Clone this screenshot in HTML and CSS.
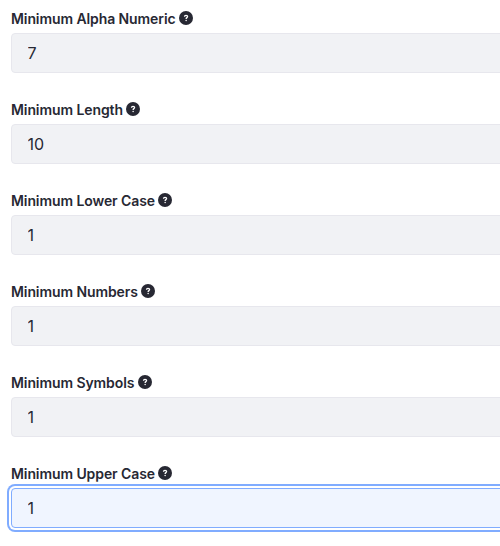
FILE: index.html
```html
<!DOCTYPE html>
<html lang="en">
<head>
<meta charset="utf-8">
<title>Password Policy</title>
<link rel="stylesheet" href="styles.css">
</head>
<body>
<svg width="0" height="0" class="defs"><symbol id="help" viewBox="0 0 14 14"><circle cx="7" cy="7" r="7" fill="#272833"/><path d="M5.500 5.700C5.500 4.700 6.200 4.300 7 4.300s1.600.5 1.600 1.300C8.600 6.700 7.100 6.600 7.100 7.900" fill="none" stroke="#fff" stroke-width="1.300"/><circle cx="7.100" cy="9.500" r=".75" fill="#fff"/></symbol></svg>
<form class="form">
<div class="group"><label class="label" for="f1"><span>Minimum Alpha Numeric</span><svg class="icon"><use href="#help"/></svg></label><input class="control" id="f1" value="7"></div>
<div class="group"><label class="label" for="f2"><span>Minimum Length</span><svg class="icon"><use href="#help"/></svg></label><input class="control" id="f2" value="10"></div>
<div class="group"><label class="label" for="f3"><span>Minimum Lower Case</span><svg class="icon"><use href="#help"/></svg></label><input class="control" id="f3" value="1"></div>
<div class="group"><label class="label" for="f4"><span>Minimum Numbers</span><svg class="icon"><use href="#help"/></svg></label><input class="control" id="f4" value="1"></div>
<div class="group"><label class="label" for="f5"><span>Minimum Symbols</span><svg class="icon"><use href="#help"/></svg></label><input class="control" id="f5" value="1"></div>
<div class="group"><label class="label" for="f6"><span>Minimum Upper Case</span><svg class="icon"><use href="#help"/></svg></label><input class="control focused" id="f6" value="1"></div>
</form>
</body>
</html>
```

FILE: styles.css
```css
* { box-sizing: border-box; }
body { margin: 0; background: #fff; font-family: Inter, "Liberation Sans", sans-serif; color: #272833; overflow: hidden; }
.defs { display: block; }
.form { width: 520px; padding: 8px 0 0 11px; }
.group { margin-bottom: 26px; }
.label { display: flex; align-items: center; gap: 3.5px; height: 21px; margin-bottom: 4px; font-size: 14px; font-weight: 600; letter-spacing: -0.09px; white-space: nowrap; }
.icon { width: 14px; height: 14px; margin-bottom: 1px; }
.control { display: block; width: 509px; height: 40px; margin: 0; padding: 0 15.5px; border: 1px solid #e7e7ed; border-radius: 4px; background: #f1f2f5; color: #272833; font: 16px Inter, "Liberation Sans", sans-serif; outline: 0; }
.focused { border-color: #80acff; background: #f0f5ff; box-shadow: 0 0 0 2px #fff, 0 0 0 4px #80acff; }
```
